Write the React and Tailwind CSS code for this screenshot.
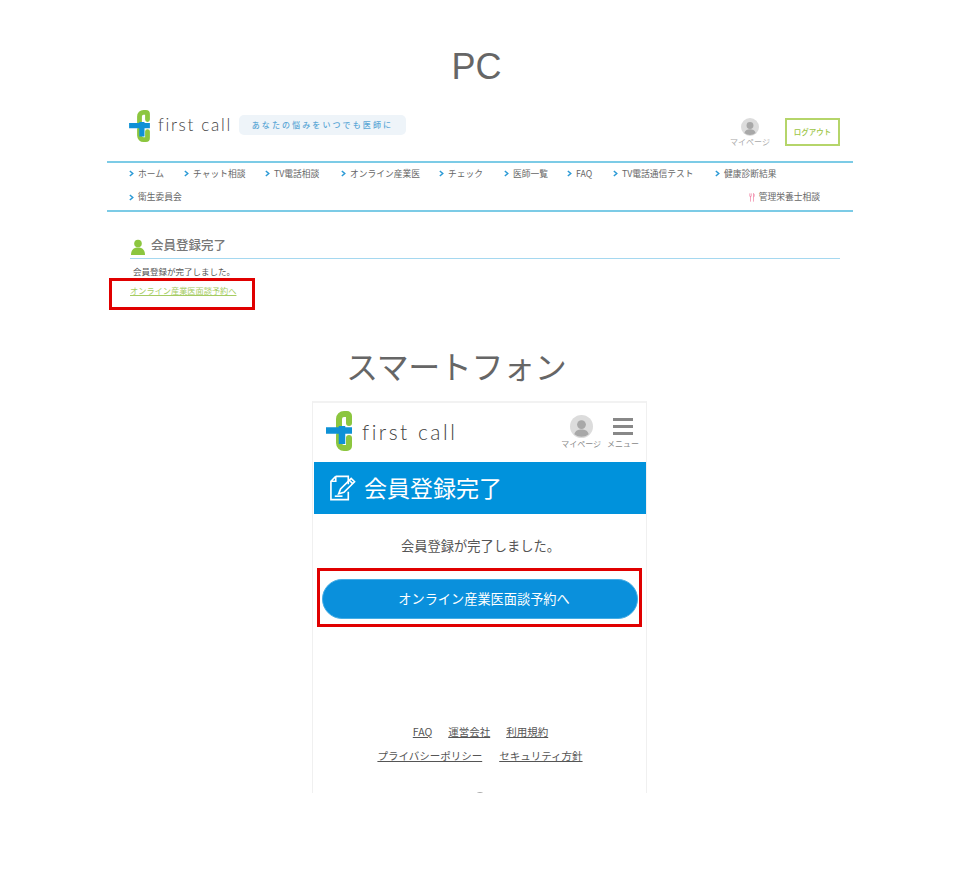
import React from 'react';

const jp = "font-['Noto_Sans_CJK_JP','Noto_Sans',sans-serif]";

const Logo = ({ className }) => (
  <svg viewBox="0 0 26 40" className={className}>
    <path d="M13 16 V8 a5 5 0 0 1 5 -5 h3 a2 2 0 0 1 2 2 V12" fill="none" stroke="#8cc63f" strokeWidth="6" strokeLinecap="round" />
    <path d="M23 27 V35 a2 2 0 0 1 -2 2 h-3 a5 5 0 0 1 -5 -5 V24" fill="none" stroke="#8cc63f" strokeWidth="6" strokeLinecap="round" />
    <path d="M0 19.500 H26 M16 15 V33" fill="none" stroke="#0e91d6" strokeWidth="6.500" />
  </svg>
);

const Avatar = ({ className }) => (
  <svg viewBox="0 0 24 24" className={className}>
    <circle cx="12" cy="12" r="12" fill="#dcdcdc" />
    <circle cx="12" cy="10" r="4.600" fill="#a8a8a8" />
    <path d="M4.500 20 c1 -4 4 -5 7.500 -5 s6.500 1 7.500 5 a12 12 0 0 1 -15 0z" fill="#a8a8a8" />
  </svg>
);

const navTop = [
  ['ホーム', 'w-[55px]'],
  ['チャット相談', 'w-[81px]'],
  ['TV電話相談', 'w-[76px]'],
  ['オンライン産業医', 'w-[98px]'],
  ['チェック', 'w-[65px]'],
  ['医師一覧', 'w-[63px]'],
  ['FAQ', 'w-[46px]'],
  ['TV電話通信テスト', 'w-[102px]'],
  ['健康診断結果', 'w-[80px]'],
];

const NavItem = ({ label, className = '' }) => (
  <div className={`flex items-center gap-[4px] ${className}`}>
    <svg viewBox="0 0 6 8" className="w-[5px] h-[7px] shrink-0">
      <path d="M1 1 L4.500 4 L1 7" fill="none" stroke="#2b9ad6" strokeWidth="1.800" />
    </svg>
    <span className="whitespace-nowrap">{label}</span>
  </div>
);

const PcView = () => (
  <div className={`relative w-[746px] ml-[107px] mt-[18px] h-[203px] text-[#666] ${jp}`}>
    <div className="flex h-[54px] pl-[22px] pr-[13px]">
      <Logo className="w-[21px] h-[32px] mt-[3px]" />
      <span className="ml-[8px] mt-[6px] text-[17px] leading-[24px] tracking-[1.700px] font-light text-[#444] font-['Lato',sans-serif]">first call</span>
      <div className="ml-[7px] mt-[8px] h-[20px] w-[167px] rounded-[5px] bg-[#eef4f9] flex items-center justify-center text-[8px] font-medium tracking-[2.100px] text-[#5ba7d6]">
        あなたの悩みをいつでも医師に
      </div>
      <div className="ml-auto mt-[11px] flex flex-col items-center w-[40px] text-[8px] leading-[10px] text-[#aaa]">
        <Avatar className="w-[18px] h-[18px]" />
        <span className="mt-[1px] whitespace-nowrap">マイページ</span>
      </div>
      <div className="ml-[15px] mt-[11px] w-[55px] h-[28px] border-2 border-[#b5d56a] flex items-center justify-center text-[7.500px] font-medium text-[#9cc545]">
        ログアウト
      </div>
    </div>
    <div className="border-y-2 border-[#7ccbe6] h-[51px] pl-[22px] pr-[33px] flex flex-col text-[8.750px] text-[#666]">
      <div className="flex h-[21px] items-center">
        {navTop.map(([label, width]) => (
          <NavItem key={label} label={label} className={width} />
        ))}
      </div>
      <div className="flex h-[26px] items-center justify-between">
        <NavItem label="衛生委員会" />
        <div className="flex items-center gap-[4px]">
          <svg viewBox="0 0 8 12" className="w-[6px] h-[11px]">
            <path d="M1 0.500 V4 a1 1 0 0 0 2 0 V0.500 M2 4 V11.500 M6 0.500 V11.500 M6 0.500 c1.500 1 1.500 4 0 5" fill="none" stroke="#ee7ca0" strokeWidth="0.900" />
          </svg>
          <span>管理栄養士相談</span>
        </div>
      </div>
    </div>
    <div className="ml-[23px] mr-[13px] mt-[22px] h-[24px] flex items-center pb-[3px] pl-[1px]">
      <svg viewBox="0 0 14 16" className="w-[14px] h-[16px] mt-[5px]">
        <circle cx="7" cy="4.500" r="3.800" fill="#8cc63f" />
        <path d="M0 16 c0 -5 2.500 -7.500 7 -7.500 s7 2.500 7 7.500z" fill="#8cc63f" />
      </svg>
      <span className="ml-[6px] text-[12.500px] font-medium text-[#777] leading-[16px]">会員登録完了</span>
    </div>
    <div className="ml-[23px] mr-[13px] h-[1px] bg-[#a5d8f0]" />
    <p className="ml-[26px] mt-[6px] text-[8.500px] leading-[13px] text-[#555]">会員登録が完了しました。</p>
    <p className="ml-[23px] mt-[6px] text-[8.200px] leading-[13px] text-[#a5cc62] underline">オンライン産業医面談予約へ</p>
    <div className="absolute left-[2px] top-[171px] w-[146px] h-[32px] border-[3px] border-[#e00000]" />
  </div>
);

const SpView = () => (
  <div className={`relative w-[335px] h-[392px] ml-[312px] mt-[10px] border-x border-[#f0f0f0] border-t-2 border-t-[#f2f2f2] overflow-hidden text-[#555] ${jp}`}>
    <div className="flex h-[59px] pl-[13px] pr-[7px]">
      <Logo className="w-[26px] h-[40px] mt-[8px]" />
      <span className="ml-[10px] mt-[13px] text-[21px] leading-[32px] tracking-[2.500px] font-light text-[#444] font-['Lato',sans-serif]">first call</span>
      <div className="ml-auto mt-[12px] flex flex-col items-center text-[8px] leading-[10px] text-[#888]">
        <Avatar className="w-[23px] h-[23px]" />
        <span className="mt-[1px] whitespace-nowrap">マイページ</span>
      </div>
      <div className="ml-[6px] mt-[12px] flex flex-col items-center text-[8px] leading-[10px] text-[#888]">
        <div className="w-[20px] h-[23px] flex flex-col justify-center gap-[4px]">
          <div className="h-[3px] bg-[#888]" />
          <div className="h-[3px] bg-[#888]" />
          <div className="h-[3px] bg-[#888]" />
        </div>
        <span className="mt-[1px] whitespace-nowrap">メニュー</span>
      </div>
    </div>
    <div className="h-[52px] ml-[1px] bg-[#0092dc] flex items-center pl-[15px] pb-[3px] text-white">
      <svg viewBox="0 0 28 28" className="w-[27px] h-[28px] mt-[3px]" fill="none" stroke="white" strokeWidth="1.700">
        <path d="M7 2 H20 V10 M7 2 L2 7 V26 H20 V18 M7 2 V7 H2" />
        <path d="M10 20 L12 15 L23 4 L26.500 7.500 L15.500 18.500 L10 20z M21 6 L24.500 9.500" />
        <path d="M6 22.500 H14" />
      </svg>
      <span className="ml-[8px] text-[23px] leading-[32px]">会員登録完了</span>
    </div>
    <p className="mt-[21px] text-center pl-[2px] text-[13.250px] leading-[21px] text-[#555]">会員登録が完了しました。</p>
    <div className="relative ml-[9px] mr-[8px] mt-[23px] h-[40px] rounded-[20px] bg-[#0a90dc] border border-[#45aee6] flex items-center justify-center pl-[8px] text-[13.200px] text-white">
      オンライン産業医面談予約へ
      <div className="absolute left-[-6px] right-[-5px] top-[-12px] bottom-[-9px] border-[3px] border-[#e00000]" />
    </div>
    <div className="mt-[104px] flex justify-center gap-[16px] pl-[2px] text-[10.500px] leading-[18px] underline text-[#555]">
      <span>FAQ</span>
      <span>運営会社</span>
      <span>利用規約</span>
    </div>
    <div className="mt-[6px] flex justify-center gap-[17px] pl-[1px] text-[10.500px] leading-[18px] underline text-[#555]">
      <span>プライバシーポリシー</span>
      <span>セキュリティ方針</span>
    </div>
    <div className="mt-[27px] ml-[161px] w-[12px] h-[12px] rounded-full border border-[#aaa]" />
  </div>
);

export default function App() {
  return (
    <div className="w-[959px] h-[869px] bg-white overflow-hidden font-['Liberation_Sans',sans-serif]">
      <h2 className="pt-[44px] text-center text-[36px] leading-[45px] text-[#666] ml-[-6px]">PC</h2>
      <PcView />
      <h2 className="mt-[36px] ml-[346px] text-[32px] leading-[45px] tracking-[-0.400px] text-[#666] font-['Liberation_Sans','Noto_Sans_CJK_JP',sans-serif]">スマートフォン</h2>
      <SpView />
    </div>
  );
}
